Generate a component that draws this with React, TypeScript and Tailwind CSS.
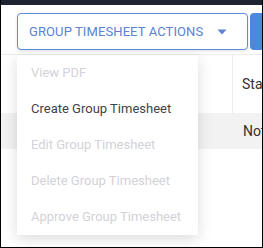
import { useState } from "react"

const actions = [
  { label: "View PDF", enabled: false },
  { label: "Create Group Timesheet", enabled: true },
  { label: "Edit Group Timesheet", enabled: false },
  { label: "Delete Group Timesheet", enabled: false },
  { label: "Approve Group Timesheet", enabled: false },
]

export default function App() {
  const [open] = useState(true)

  return (
    <div className="relative w-[263px] h-[248px] overflow-hidden bg-white border border-t-0 border-black font-['Roboto',sans-serif]">
      <div className="h-[5px] bg-[#1f2433]" />

      {/* toolbar */}
      <div className="h-[50px] flex items-start pt-[8px] pl-[16px] gap-[2px] border-b border-[#ececec]">
        <button className="shrink-0 w-[231px] h-[37px] flex items-center justify-between pl-[11px] pr-[20px] rounded-[4px] border border-[#5b8dd9] bg-white shadow-[0_1px_3px_rgba(0,0,0,0.12)] text-[13px] text-[#5b82d4] tracking-[0.1px]">
          <span>GROUP TIMESHEET ACTIONS</span>
          <svg width="10" height="6" viewBox="0 0 10 6">
            <path d="M0.5 0.5 L9.5 0.5 L5 5.5 Z" fill="#5b82d4" />
          </svg>
        </button>
        <div className="shrink-0 w-[14px] h-[37px] rounded-l-[4px] bg-[#4a89dc]" />
      </div>

      {/* table behind */}
      <div className="flex h-[58px] bg-white">
        <div className="shrink-0 w-[232px] border-r border-[#ececec]" />
        <div className="shrink-0 flex items-center pl-[9px] text-[14px] text-[#333] whitespace-nowrap">Status</div>
      </div>
      <div className="flex h-[36px] bg-[#f2f2f2]">
        <div className="shrink-0 w-[233px]" />
        <div className="shrink-0 flex items-center pl-[9px] text-[14px] text-[#333] whitespace-nowrap">Not submitted</div>
      </div>

      {open && (
        <div className="absolute left-[16px] top-[55px] w-[181px] bg-white shadow-[0_4px_14px_rgba(0,0,0,0.14)]">
          {actions.map((a) => (
            <div
              key={a.label}
              className={`h-[36px] flex items-center pl-[14px] text-[13px] ${a.enabled ? "text-[#42424f]" : "text-[#d2d2d8]"}`}
            >
              {a.label}
            </div>
          ))}
        </div>
      )}
    </div>
  )
}
